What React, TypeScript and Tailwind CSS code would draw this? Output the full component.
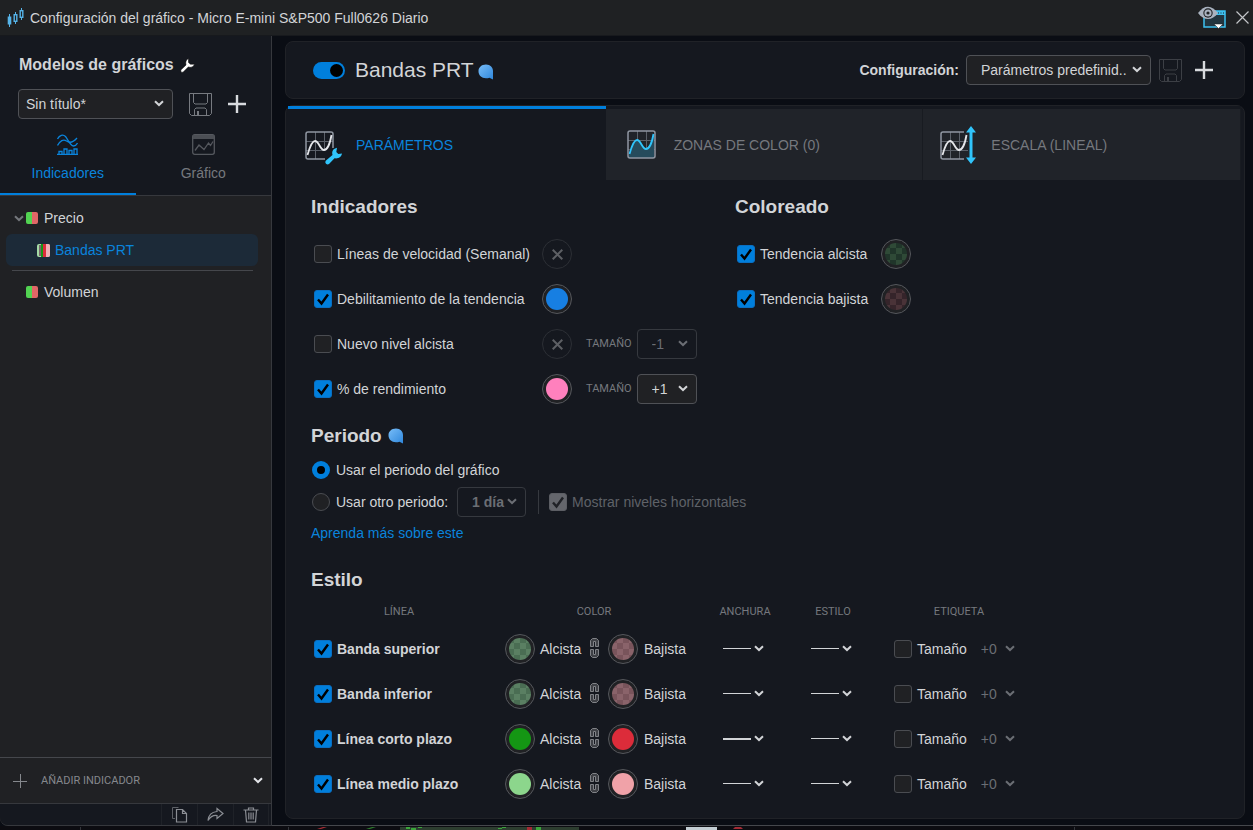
import React, { useId, useState } from "react";
import { clsx } from "clsx";

interface StyleLine {
  name: string;
  bullish: string;
  bearish: string;
  thick?: boolean;
}

const CHECKER_DARK_GREEN =
  "bg-[conic-gradient(#2f4a37_25%,#20352a_0_50%,#2f4a37_0_75%,#20352a_0)] bg-[length:12px_12px] bg-center";
const CHECKER_DARK_RED =
  "bg-[conic-gradient(#4a3338_25%,#35242a_0_50%,#4a3338_0_75%,#35242a_0)] bg-[length:12px_12px] bg-center";
const CHECKER_GREEN =
  "bg-[conic-gradient(#5a7f62_25%,#4a6d53_0_50%,#5a7f62_0_75%,#4a6d53_0)] bg-[length:12px_12px] bg-center";
const CHECKER_RED =
  "bg-[conic-gradient(#8a636a_25%,#79545b_0_50%,#8a636a_0_75%,#79545b_0)] bg-[length:12px_12px] bg-center";

const STYLE_LINES: StyleLine[] = [
  { name: "Banda superior", bullish: CHECKER_GREEN, bearish: CHECKER_RED },
  { name: "Banda inferior", bullish: CHECKER_GREEN, bearish: CHECKER_RED },
  { name: "Línea corto plazo", bullish: "bg-[#149614]", bearish: "bg-[#dc2c3a]", thick: true },
  { name: "Línea medio plazo", bullish: "bg-[#8cd68c]", bearish: "bg-[#f0a2a8]" },
];

/* ---------- Icons ---------- */

function Chevron({ className = "" }: { className?: string }) {
  return (
    <svg className={clsx("shrink-0", className)} width="10" height="7" viewBox="0 0 10 7" fill="none" aria-hidden="true">
      <path d="M1 1.2 5 5 9 1.2" stroke="currentColor" strokeWidth="2" />
    </svg>
  );
}

function CandlesIcon() {
  return (
    <svg width="18" height="20" viewBox="0 0 18 20" fill="none" stroke="#56b4e9" aria-hidden="true">
      <path d="M3.500 6v13M9.500 4v12M15.500 0v12" />
      <rect x="1.700" y="8.500" width="3.600" height="8" fill="#56b4e9" stroke="none" />
      <rect x="8.200" y="6.700" width="2.600" height="6.600" fill="#1f2123" strokeWidth="1.400" />
      <rect x="14.200" y="2.700" width="2.600" height="6.600" fill="#1f2123" strokeWidth="1.400" />
    </svg>
  );
}

function WindowEyeIcon() {
  return (
    <svg width="30" height="24" viewBox="0 0 30 24" fill="none" aria-hidden="true">
      <rect x="6" y="5" width="21" height="16" fill="#22353f" stroke="#3cc0f0" strokeWidth="1.5" />
      <path d="M17 5h10v4H17z" fill="#3cc0f0" />
      <path d="M20 7h1M22.500 7h1M25 7h1" stroke="#1f2123" />
      <path d="M0 7C3.500 2.500 6.500.700 10 .700S17 3 20 7c-3 4-6.500 6-10 6S3 11 0 7Z" fill="#a9b2bf" />
      <circle cx="10" cy="7" r="4.700" fill="#1f2123" />
      <circle cx="10" cy="7" r="3.600" fill="#a9b2bf" />
      <circle cx="10" cy="7" r="1.600" fill="#1f2123" />
      <path d="M16 18h9l-4.500 4.500z" fill="#fff" stroke="#1f2123" strokeWidth=".5" />
    </svg>
  );
}

function CloseIcon() {
  return (
    <svg width="13" height="13" viewBox="0 0 13 13" stroke="#c3c5c8" strokeWidth="1.2" aria-hidden="true">
      <path d="M.5.5l12 12M12.500.5l-12 12" />
    </svg>
  );
}

function WrenchIcon() {
  return (
    <svg width="15" height="15" viewBox="0 0 15 15" fill="none" aria-hidden="true">
      <path
        d="M.8 12 6 7C5.200 4 6.200 1.500 8.500.5V4.500L10.500 6.200H14.500C13.800 8.700 11 10 8.300 9L3 14.200H1Z"
        fill="#fff"
        stroke="#000"
        strokeWidth=".5"
      />
    </svg>
  );
}

function SaveIcon() {
  return (
    <svg width="23" height="23" viewBox="0 0 23 23" fill="none" stroke="currentColor" aria-hidden="true">
      <path d="M.5.5h22v20l-2 2h-18l-2-2z" />
      <path d="M4.500.5v9l1.500 1.500h11l1.500-1.500v-9" />
      <path d="M5.500 22.500v-6l1.500-1.500h9l1.500 1.500v6" />
      <path d="M8.500 18v4M9.500 18v4" />
    </svg>
  );
}

function PlusIcon({ thin = false }: { thin?: boolean }) {
  return thin ? (
    <svg width="14" height="14" viewBox="0 0 14 14" stroke="#85888d" aria-hidden="true">
      <path d="M7.500 0v14M0 7.500h14" />
    </svg>
  ) : (
    <svg width="18" height="18" viewBox="0 0 18 18" stroke="#d8dade" strokeWidth="2.400" aria-hidden="true">
      <path d="M9 0v18M0 9h18" />
    </svg>
  );
}

function BubbleIcon() {
  const id = useId();
  return (
    <svg width="16" height="16" viewBox="0 0 16 16" aria-hidden="true">
      <defs>
        <linearGradient id={id} x1="0" y1="0" x2="1" y2="1">
          <stop offset="0" stopColor="#78bdf8" />
          <stop offset="1" stopColor="#2f87dc" />
        </linearGradient>
      </defs>
      <path d="M8 .5c4.500 0 7 3 7 6.500v8.500l-3.500-1.800c-1 .4-2.200.6-3.500.6-4.500 0-7.500-3-7.500-7S3.500.5 8 .5Z" fill={`url(#${id})`} />
    </svg>
  );
}

function IndicatorsIcon() {
  return (
    <svg width="21" height="21" viewBox="0 0 21 21" fill="none" stroke="currentColor" strokeWidth="1.3" aria-hidden="true">
      <path d="M.5 5C2.500 1 6 0 8.500 2.500c2.500 3 4.500 9 8 9.500 1.800 0 3-1.200 4-3" />
      <path d="M.5 11.500C3 6.500 6.500 5 9.500 7c2.500 1.800 6 2.200 10.500-3" />
      <path d="M0 20.300h21M2 20v-2.500h3V20M7 20v-5h3v5M12 20v-3.500h3V20M17 20v-5h3v5" />
    </svg>
  );
}

function ChartTabIcon() {
  return (
    <svg width="23" height="21" viewBox="0 0 23 21" fill="none" stroke="#55585e" strokeWidth="1.3" aria-hidden="true">
      <rect x=".7" y=".7" width="21.600" height="19.600" rx="2" />
      <path d="M1 1h21v4H1z" fill="#4b4e54" stroke="none" />
      <path d="m3 16.500 4-5.500 5 4.500 4.500-6.500 2 2.500 2.500-4" />
    </svg>
  );
}

function ParamsIcon() {
  return (
    <svg width="37" height="44" viewBox="0 -8 37 44" fill="none" aria-hidden="true">
      <path d="M10.500 1v27M19.500 1v18M1 10.500h27M1 19.500h19" stroke="#5b6069" />
      <path d="M20 28H3a2 2 0 0 1-2-2V3a2 2 0 0 1 2-2h23a2 2 0 0 1 2 2v14" stroke="#9097a2" strokeWidth="1.500" />
      <path d="M2.500 24C5 15 7 10 10 10c4 0 5 9 9 9 3 0 6-6 7.500-15" stroke="#e4e6ea" strokeWidth="1.800" />
      <path
        d="m21 29.500 6.500-5.500c-1-4 .8-6.500 4.500-7.300l-.7 4.300 2 2 3.700-.5c-.5 3.500-3.800 5.500-7.500 4.800L24 33c-2.500 1.500-4.800-1.500-3-3.500Z"
        fill="#30c4fb"
      />
    </svg>
  );
}

function ZonesIcon() {
  return (
    <svg width="29" height="29" viewBox="0 0 29 29" fill="none" aria-hidden="true">
      <path d="M10.500 1v27M19.500 1v27M1 10.500h27M1 19.500h27" stroke="#5b6069" />
      <path d="M2 25C5 15 7 10 10 10c4 0 5 9 9 9 3 0 6-6 8-15v24H2Z" fill="#264b5c" />
      <path d="M2.500 24C5 15 7 10 10 10c4 0 5 9 9 9 3 0 6-6 7.500-15" stroke="#30c4fb" strokeWidth="1.800" />
      <rect x="1" y="1" width="27" height="27" rx="2" stroke="#9097a2" strokeWidth="1.500" />
    </svg>
  );
}

function ScaleIcon() {
  return (
    <svg width="37" height="38" viewBox="0 0 37 38" fill="none" aria-hidden="true">
      <g transform="translate(0 5)">
        <path d="M10.500 1v27M19.500 1v27M1 10.500h27M1 19.500h27" stroke="#5b6069" />
        <path d="M24 28H3a2 2 0 0 1-2-2V3a2 2 0 0 1 2-2h21" stroke="#9097a2" strokeWidth="1.500" />
        <path d="M2.500 24C5 15 7 10 10 10c4 0 5 9 9 9 3 0 6-6 7.500-15" stroke="#e4e6ea" strokeWidth="1.800" />
      </g>
      <path d="M31 5v28" stroke="#30c4fb" strokeWidth="3" />
      <path d="m31 0 5 6.500H26zM31 38l5-6.500H26z" fill="#30c4fb" />
    </svg>
  );
}

function LinkIcon() {
  return (
    <svg width="9" height="21" viewBox="0 0 9 21" fill="#3f4146" stroke="#808287" aria-hidden="true">
      <path d="M.5 8.500V2.500l2-2h4l2 2v6h-3v-5h-2v5z" />
      <path d="M.5 11.500v6l2 2h4l2-2v-6h-3v5h-2v-5z" />
    </svg>
  );
}

function CopyIcon() {
  return (
    <svg width="16" height="16" viewBox="0 0 16 16" fill="none" stroke="#8b8e94" aria-hidden="true">
      <path d="M3 11.500H.5v-11h6" stroke="#5d6066" />
      <path d="M4.500 2.500h6l4 4v8.500h-10zM10.500 2.500v4h4" strokeWidth="1.200" />
    </svg>
  );
}

function ShareIcon() {
  return (
    <svg width="17" height="15" viewBox="0 0 17 15" fill="none" stroke="#8b8e94" strokeWidth="1.200" aria-hidden="true">
      <path d="M10 1.500 16 6.500l-6 5V8.500C6 8 3.500 9.500 1 13.500 1.500 8 5 5 10 4.500z" />
    </svg>
  );
}

function TrashIcon() {
  return (
    <svg width="16" height="16" viewBox="0 0 16 16" fill="none" stroke="#8b8e94" strokeWidth="1.200" aria-hidden="true">
      <path d="M.5 3h15M5.500 3V1h5v2M2.500 3l1 12h9l1-12M5.800 5.500v7M8 5.500v7M10.200 5.500v7" />
    </svg>
  );
}

/* ---------- Controls ---------- */

interface CheckProps {
  label: string;
  defaultChecked?: boolean;
  disabled?: boolean;
  bold?: boolean;
}

function Check({ label, defaultChecked, disabled, bold }: CheckProps) {
  return (
    <label className={clsx("flex items-center gap-[5px] whitespace-nowrap", bold && "font-bold", disabled && "text-[#5f6268]")}>
      <span className="relative flex size-[18px] shrink-0">
        <input
          type="checkbox"
          defaultChecked={defaultChecked}
          disabled={disabled}
          className="peer size-[18px] appearance-none rounded-[3px] border border-[#4a4c51] bg-[#202124] checked:border-[#0a6fc2] checked:bg-[#007fdc] disabled:checked:border-[#5c5e64] disabled:checked:bg-[#64666c]"
        />
        <svg
          className="pointer-events-none absolute inset-0 hidden peer-checked:block"
          width="18"
          height="18"
          viewBox="0 0 18 18"
          fill="none"
          aria-hidden="true"
        >
          <path d="m4 9.500 3.500 4L14 4.500" stroke={disabled ? "#202227" : "#000"} strokeWidth="2.400" />
        </svg>
      </span>
      {label}
    </label>
  );
}

function PeriodRadio({ label, defaultChecked }: { label: string; defaultChecked?: boolean }) {
  return (
    <label className="flex items-center gap-1.5 whitespace-nowrap">
      <input
        type="radio"
        name="period"
        defaultChecked={defaultChecked}
        className="size-[18px] appearance-none rounded-full border border-[#4a4c51] bg-[#202124] checked:border-5 checked:border-[#007fdc] checked:bg-black"
      />
      {label}
    </label>
  );
}

interface SelectProps {
  label: string;
  value: string;
  className: string;
  disabled?: boolean;
}

function SelectBox({ label, value, className, disabled }: SelectProps) {
  return (
    <span className={clsx("relative flex h-[30px]", disabled ? "text-[#6b6e74]" : "text-[#d2d4d7]")}>
      <select
        aria-label={label}
        disabled={disabled}
        className={clsx(
          "w-full appearance-none rounded border",
          disabled ? "border-[#36393f]" : "border-[#4f5156] bg-[#202124]",
          className
        )}
      >
        <option>{value}</option>
      </select>
      <Chevron className="pointer-events-none absolute top-[11px] right-[9px]" />
    </span>
  );
}

function Swatch({ label, color }: { label: string; color?: string }) {
  if (!color) {
    return (
      <button
        aria-label={label}
        disabled
        className="flex size-[30px] shrink-0 items-center justify-center rounded-full border border-[#2c2f35] text-[#5d5f64]"
      >
        <svg width="11" height="11" viewBox="0 0 11 11" stroke="currentColor" strokeWidth="2" aria-hidden="true">
          <path d="m.7.7 9.600 9.600M10.300.7.7 10.300" />
        </svg>
      </button>
    );
  }
  return (
    <button
      aria-label={label}
      className="flex size-[30px] shrink-0 items-center justify-center rounded-full border border-[#55575c] bg-[#202124]"
    >
      <span className={clsx("size-[22px] rounded-full", color)} />
    </button>
  );
}

function LinePicker({ label, thick }: { label: string; thick?: boolean }) {
  return (
    <button aria-label={label} aria-haspopup="listbox" className="ml-[22px] flex items-center gap-[3px] text-[#d2d4d7]">
      <span className={clsx("w-7 bg-current", thick ? "h-0.5" : "h-px")} />
      <Chevron />
    </button>
  );
}

function SectionTitle({ children }: { children: React.ReactNode }) {
  return <h2 className="flex h-7 items-center gap-1.5 text-[19px] font-bold">{children}</h2>;
}

/* ---------- Sidebar ---------- */

function Sidebar() {
  const [tab, setTab] = useState("Indicadores");
  const tabs = [
    { name: "Indicadores", icon: <IndicatorsIcon /> },
    { name: "Gráfico", icon: <ChartTabIcon /> },
  ];

  return (
    <aside className="flex w-[272px] shrink-0 flex-col rounded-bl-lg border-r border-b border-[#36383d] bg-[#202124]">
      <div className="bg-[#15181f]">
        <h1 className="flex items-center gap-1.5 px-[19px] pt-[17px] text-base font-bold">
          Modelos de gráficos
          <WrenchIcon />
        </h1>
        <div className="flex items-center px-[18px] pt-3">
          <div className="w-[155px]">
            <SelectBox label="Modelo" value="Sin título*" className="pl-[7px]" />
          </div>
          <button aria-label="Guardar modelo" className="ml-4 text-[#777a80]">
            <SaveIcon />
          </button>
          <button aria-label="Nuevo modelo" className="ml-4">
            <PlusIcon />
          </button>
        </div>
        <div className="mt-[15px] grid grid-cols-2 border-b border-[#36383d]">
          {tabs.map((t) => (
            <button
              key={t.name}
              onClick={() => setTab(t.name)}
              className={clsx(
                "flex flex-col items-center gap-2 border-b-2 pb-2.5",
                tab === t.name ? "border-[#007fdc] text-[#0a84dc]" : "border-transparent text-[#75787e]"
              )}
            >
              {t.icon}
              {t.name}
            </button>
          ))}
        </div>
      </div>

      {/* Indicator tree */}
      <ul className="flex-1 pt-2.5">
        <li>
          <div className="flex h-6 items-center pl-3.5">
            <Chevron className="mr-0.5 text-[#74777c]" />
            <span className="mr-1.5 size-3 rounded-xs bg-linear-to-r from-[#52d352] from-50% to-[#e06666] to-50%" />
            Precio
          </div>
          <div className="mt-1 mr-[13px] ml-1.5 flex h-8 items-center rounded-md bg-[#1c2a38] pl-[31px] text-[#0a84dc]">
            <svg className="mr-[5px]" width="13" height="13" viewBox="0 0 13 13" aria-hidden="true">
              <rect width="13" height="13" rx="2" fill="#a5dba5" />
              <path d="M2 1h2v11H2z" fill="#77656a" />
              <path d="M4 0h2v13H4z" fill="#149614" />
              <path d="M6 0h3v13H6z" fill="#dc2c3a" />
              <path d="M9 0h2a2 2 0 0 1 2 2v9a2 2 0 0 1-2 2H9z" fill="#f0b0b5" />
            </svg>
            Bandas PRT
          </div>
        </li>
        <li className="mt-1 mr-[18px] ml-3 border-t border-[#45474c]" />
        <li className="mt-[9px] flex h-6 items-center pl-[26px]">
          <span className="mr-1.5 size-3 rounded-xs bg-linear-to-r from-[#52d352] from-50% to-[#e06666] to-50%" />
          Volumen
        </li>
      </ul>

      <button className="flex h-[46px] items-center border-t border-[#45474c] pr-2 pl-[13px] font-[Roboto,sans-serif] text-[11px] text-[#85888d]">
        <PlusIcon thin />
        <span className="ml-3.5 flex-1 text-left">AÑADIR INDICADOR</span>
        <Chevron className="text-[#e4e6ea]" />
      </button>
      <div className="flex h-[22px] justify-end rounded-bl-lg border-t border-[#36383d] bg-[#15181f] pr-0.5">
        <button aria-label="Duplicar" className="flex w-9 items-center justify-center border-l border-[#1f2228]">
          <CopyIcon />
        </button>
        <button aria-label="Compartir" className="flex w-9 items-center justify-center border-l border-[#1f2228]">
          <ShareIcon />
        </button>
        <button aria-label="Eliminar" className="flex w-9 items-center justify-center border-x border-[#1f2228]">
          <TrashIcon />
        </button>
      </div>
    </aside>
  );
}

/* ---------- Main panels ---------- */

function IndicatorHeader() {
  return (
    <section className="flex h-[58px] items-center rounded-lg border border-[#202227] bg-[#15181f] pr-[31px] pl-[27px]">
      <label className="flex items-center gap-2.5 text-[21px]">
        <input
          type="checkbox"
          role="switch"
          defaultChecked
          className="flex h-[17px] w-8 appearance-none items-center rounded-full bg-[#4a4c51] px-0.5 before:size-[13px] before:rounded-full before:bg-black checked:justify-end checked:bg-[#007fdc]"
        />
        Bandas PRT
      </label>
      <span className="mt-1 ml-1">
        <BubbleIcon />
      </span>
      <div className="ml-auto flex items-center">
        <span className="mr-[7px] font-bold">Configuración:</span>
        <div className="w-[185px]">
          <SelectBox label="Configuración" value="Parámetros predefinid.." className="pl-3.5" />
        </div>
        <button aria-label="Guardar configuración" disabled className="ml-2 text-[#3c3f45]">
          <SaveIcon />
        </button>
        <button aria-label="Nueva configuración" className="ml-[13px]">
          <PlusIcon />
        </button>
      </div>
    </section>
  );
}

function MainTabs() {
  const [active, setActive] = useState(0);
  const tabs = [
    { label: "PARÁMETROS", icon: <ParamsIcon /> },
    { label: "ZONAS DE COLOR (0)", icon: <ZonesIcon /> },
    { label: "ESCALA (LINEAL)", icon: <ScaleIcon /> },
  ];

  return (
    <div role="tablist" className="mr-[3px] ml-0.5 grid h-[74px] grid-cols-3">
      {tabs.map((t, i) => (
        <button
          key={t.label}
          role="tab"
          aria-selected={active === i}
          onClick={() => setActive(i)}
          className={clsx(
            "flex items-center gap-3.5 border-t-3 pl-[17px]",
            active === i
              ? "border-t-[#007fdc] text-[#0a84dc]"
              : "border-r border-t-[#15181f] border-r-[#181b21] bg-[#202329] text-[#75787e]"
          )}
        >
          <span className="flex w-[37px] justify-center">{t.icon}</span>
          {t.label}
        </button>
      ))}
    </div>
  );
}

function SizeSelect({ value, disabled }: { value: string; disabled?: boolean }) {
  return (
    <div className="ml-3.5 flex items-center gap-[5px]">
      <span className="font-[Roboto,sans-serif] text-[11px] text-[#75787e]">TAMAÑO</span>
      <div className="w-[60px]">
        <SelectBox label="Tamaño" value={value} disabled={disabled} className="pl-3.5" />
      </div>
    </div>
  );
}

function IndicatorRow({ label, color, size }: { label: string; color?: string; size?: string }) {
  return (
    <div className="flex h-[30px] items-center">
      <div className="w-[228px]">
        <Check label={label} defaultChecked={!!color} />
      </div>
      <Swatch label={`Color: ${label}`} color={color} />
      {size && <SizeSelect value={size} disabled={!color} />}
    </div>
  );
}

function StyleTable() {
  return (
    <table className="mt-1 table-fixed text-left">
      <colgroup>
        <col className="w-[176px]" />
        <col className="w-[214px]" />
        <col className="w-[88px]" />
        <col className="w-[88px]" />
        <col className="w-[164px]" />
      </colgroup>
      <thead>
        <tr className="h-7 text-center font-[Roboto,sans-serif] text-[11px] text-[#75787e]">
          {["LÍNEA", "COLOR", "ANCHURA", "ESTILO", "ETIQUETA"].map((h) => (
            <th key={h} scope="col" className="p-0 font-normal">
              {h}
            </th>
          ))}
        </tr>
      </thead>
      <tbody>
        {STYLE_LINES.map((line) => (
          <tr key={line.name} className="h-[45px]">
            <td className="p-0 pl-[3px]">
              <Check label={line.name} defaultChecked bold />
            </td>
            <td className="p-0">
              <div className="flex items-center pl-[18px]">
                <Swatch label={`${line.name}: color alcista`} color={line.bullish} />
                <span className="ml-[5px] w-[50px]">Alcista</span>
                <LinkIcon />
                <span className="ml-[9px] flex items-center gap-1.5">
                  <Swatch label={`${line.name}: color bajista`} color={line.bearish} />
                  Bajista
                </span>
              </div>
            </td>
            <td className="p-0">
              <LinePicker label={`${line.name}: anchura`} thick={line.thick} />
            </td>
            <td className="p-0">
              <LinePicker label={`${line.name}: estilo`} />
            </td>
            <td className="p-0">
              <div className="flex items-center pl-[17px]">
                <Check label="Tamaño" />
                <span className="relative ml-3.5 flex items-center text-[#6b6e74]">
                  <select aria-label={`${line.name}: tamaño de etiqueta`} disabled className="w-[34px] appearance-none">
                    <option>+0</option>
                  </select>
                  <Chevron className="pointer-events-none absolute right-0" />
                </span>
              </div>
            </td>
          </tr>
        ))}
      </tbody>
    </table>
  );
}

function ParametersPanel() {
  return (
    <section className="mt-1.5 flex-1 rounded-lg border border-[#202227] bg-[#15181f]">
      <MainTabs />
      <div className="px-[25px] pt-[13px] pb-2.5">
        <div className="grid grid-cols-[424px_1fr]">
          <div>
            <SectionTitle>Indicadores</SectionTitle>
            <div className="mt-[18px] flex flex-col gap-[15px] pl-[3px]">
              <IndicatorRow label="Líneas de velocidad (Semanal)" />
              <IndicatorRow label="Debilitamiento de la tendencia" color="bg-[#177fe2]" />
              <IndicatorRow label="Nuevo nivel alcista" size="-1" />
              <IndicatorRow label="% de rendimiento" color="bg-[#ff80bd]" size="+1" />
            </div>
          </div>
          <div>
            <SectionTitle>Coloreado</SectionTitle>
            <div className="mt-[18px] flex flex-col gap-[15px] pl-0.5">
              <div className="flex items-center">
                <div className="w-[144px]">
                  <Check label="Tendencia alcista" defaultChecked />
                </div>
                <Swatch label="Color: tendencia alcista" color={CHECKER_DARK_GREEN} />
              </div>
              <div className="flex items-center">
                <div className="w-[144px]">
                  <Check label="Tendencia bajista" defaultChecked />
                </div>
                <Swatch label="Color: tendencia bajista" color={CHECKER_DARK_RED} />
              </div>
            </div>
          </div>
        </div>

        <div className="mt-[18px]">
          <SectionTitle>
            Periodo
            <BubbleIcon />
          </SectionTitle>
        </div>
        <div className="mt-2.5 flex flex-col gap-[7px] pl-px">
          <PeriodRadio label="Usar el periodo del gráfico" defaultChecked />
          <div className="flex items-center">
            <PeriodRadio label="Usar otro periodo:" />
            <div className="ml-[9px] w-[69px] font-bold">
              <SelectBox label="Otro periodo" value="1 día" disabled className="pl-3.5" />
            </div>
            <span className="mr-2.5 ml-3 h-6 w-px bg-[#36393f]" />
            <Check label="Mostrar niveles horizontales" defaultChecked disabled />
          </div>
        </div>
        <a href="#periodo" className="mt-1.5 inline-block text-[#0a84dc]">
          Aprenda más sobre este
        </a>

        <div className="mt-[23px]">
          <SectionTitle>Estilo</SectionTitle>
        </div>
        <StyleTable />
      </div>
    </section>
  );
}

// Sliver of the chart that shows under the dialog
function ChartEdge() {
  return (
    <svg className="block h-1 w-full" viewBox="0 0 1253 4" preserveAspectRatio="none" aria-hidden="true">
      <path d="M0 0h1253v4H0z" fill="#0c0c11" />
      <path d="M80 1h1v3h-1zM288 1h1v3h-1zM1074 1h1v3h-1z" fill="#33353a" />
      <path d="M400 1h179v3H400z" fill="#2c3d2f" />
      <path d="M406 1h4v2h-4zM411 2h5v2h-5zM418 1h4v1h-4zM498 2h4v1h-4zM502 1h4v1h-4zM536 1h5v3h-5z" fill="#3aa63a" />
      <path d="M317 3l6-2h4l-6 2zM527 1h5v3h-5zM733 3l2-2h6l2 2z" fill="#a32a34" />
      <path d="M366 3l6-2h4l-6 2z" fill="#2c7a2c" />
      <path d="M686 1h31v3h-31z" fill="#c3cdd3" />
    </svg>
  );
}

export default function App() {
  return (
    <div className="flex min-h-screen flex-col bg-[#0a0d14] font-['Liberation_Sans',Arial,sans-serif] text-sm text-[#d2d4d7]">
      <header className="flex h-9 shrink-0 items-center border-b border-[#17191d] bg-[#1f2123] pr-1 pl-1.5">
        <CandlesIcon />
        <span className="ml-1.5 flex-1">Configuración del gráfico - Micro E-mini S&amp;P500 Full0626 Diario</span>
        <button aria-label="Vista de ventana">
          <WindowEyeIcon />
        </button>
        <button aria-label="Cerrar" className="ml-2">
          <CloseIcon />
        </button>
      </header>
      <div className="flex flex-1">
        <Sidebar />
        <main className="flex min-w-0 flex-1 flex-col border-b border-[#45474c] pt-[5px] pr-2 pb-1.5 pl-[13px]">
          <IndicatorHeader />
          <ParametersPanel />
        </main>
      </div>
      <ChartEdge />
    </div>
  );
}
